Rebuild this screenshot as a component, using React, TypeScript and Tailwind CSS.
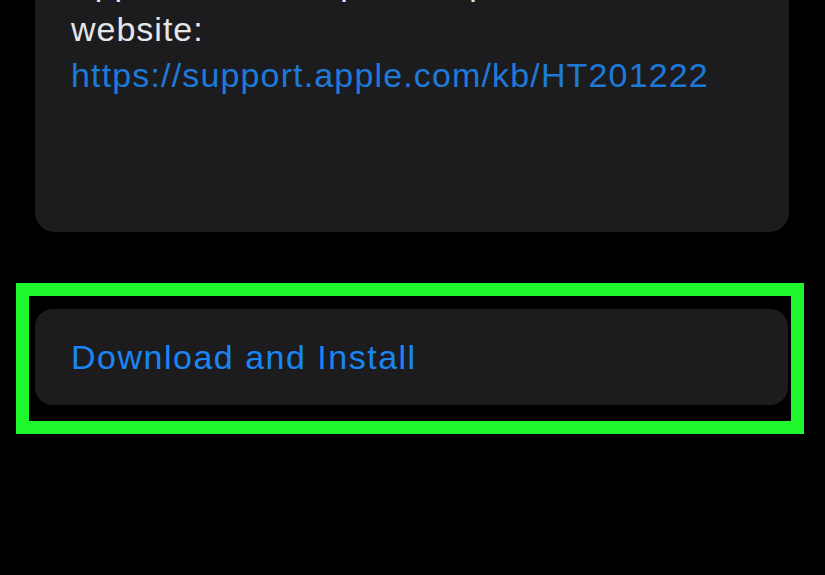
export default function App() {
  return (
    <div
      className="h-[575px] w-[825px] overflow-hidden bg-black"
      style={{ fontFamily: '"Liberation Sans", Arial, sans-serif' }}
    >
      {/* release notes card, top cut off */}
      <section className="ml-[35px] mt-[-40px] w-[754px] rounded-b-[20px] bg-[#1c1c1e] pb-[134px] pl-[36px]">
        <p className="text-[34px] leading-[46px] tracking-[1px] text-[#e5e5ea]">
          Apple software updates, please visit this
          <br />
          website:
          <br />
          <span className="tracking-[1.15px] text-[#1e7ad9]">https://support.apple.com/kb/HT201222</span>
        </p>
      </section>

      {/* highlighted action */}
      <div className="ml-[16px] mt-[51px] h-[151px] w-[788px] border-[13px] border-[#1ef72b] pl-[6px] pt-[13px]">
        <button className="flex h-[96px] w-[753px] items-center rounded-[18px] bg-[#1c1c1e] pl-[36px] text-left text-[34px] tracking-[1.5px] text-[#1a86f5]">
          Download and Install
        </button>
      </div>
    </div>
  );
}
